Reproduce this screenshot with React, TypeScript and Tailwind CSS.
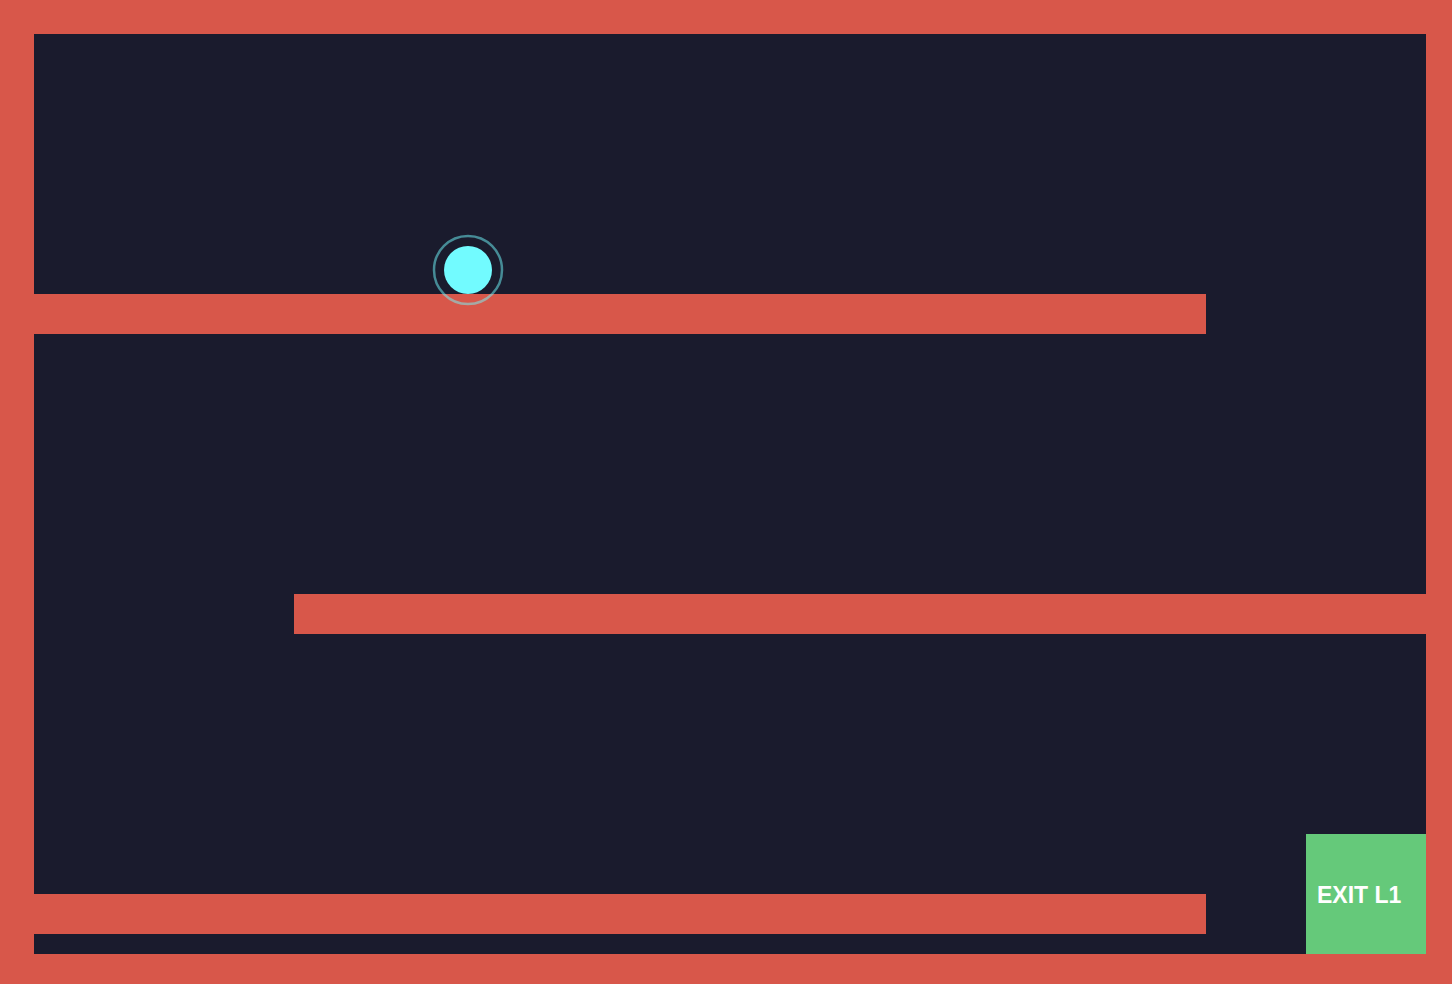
export default function App() {
  return (
    <div className="relative h-[984px] w-[1452px] overflow-hidden bg-[#d8574a] font-['Liberation_Sans',Arial,sans-serif]">
      {/* playfield */}
      <div className="absolute left-[34px] top-[34px] h-[920px] w-[1392px] bg-[#1a1b2d]" />

      {/* walls */}
      <div className="absolute left-[34px] top-[294px] h-[40px] w-[1172px] bg-[#d8574a]" />
      <div className="absolute left-[294px] top-[594px] h-[40px] w-[1132px] bg-[#d8574a]" />
      <div className="absolute left-[34px] top-[894px] h-[40px] w-[1172px] bg-[#d8574a]" />

      {/* exit */}
      <div className="absolute left-[1306px] top-[834px] flex h-[120px] w-[120px] items-center bg-[#65c97a] pl-[11px] pt-[3px]">
        <span className="text-[23px] font-bold leading-none text-white">EXIT L1</span>
      </div>

      {/* ball */}
      <svg className="absolute left-[431px] top-[233px]" width="74" height="74" viewBox="0 0 74 74">
        <circle cx="37" cy="37" r="24" fill="#72fbff" />
        <circle cx="37" cy="37" r="34" fill="none" stroke="#72fbff" strokeOpacity="0.5" strokeWidth="2.5" />
      </svg>
    </div>
  );
}
